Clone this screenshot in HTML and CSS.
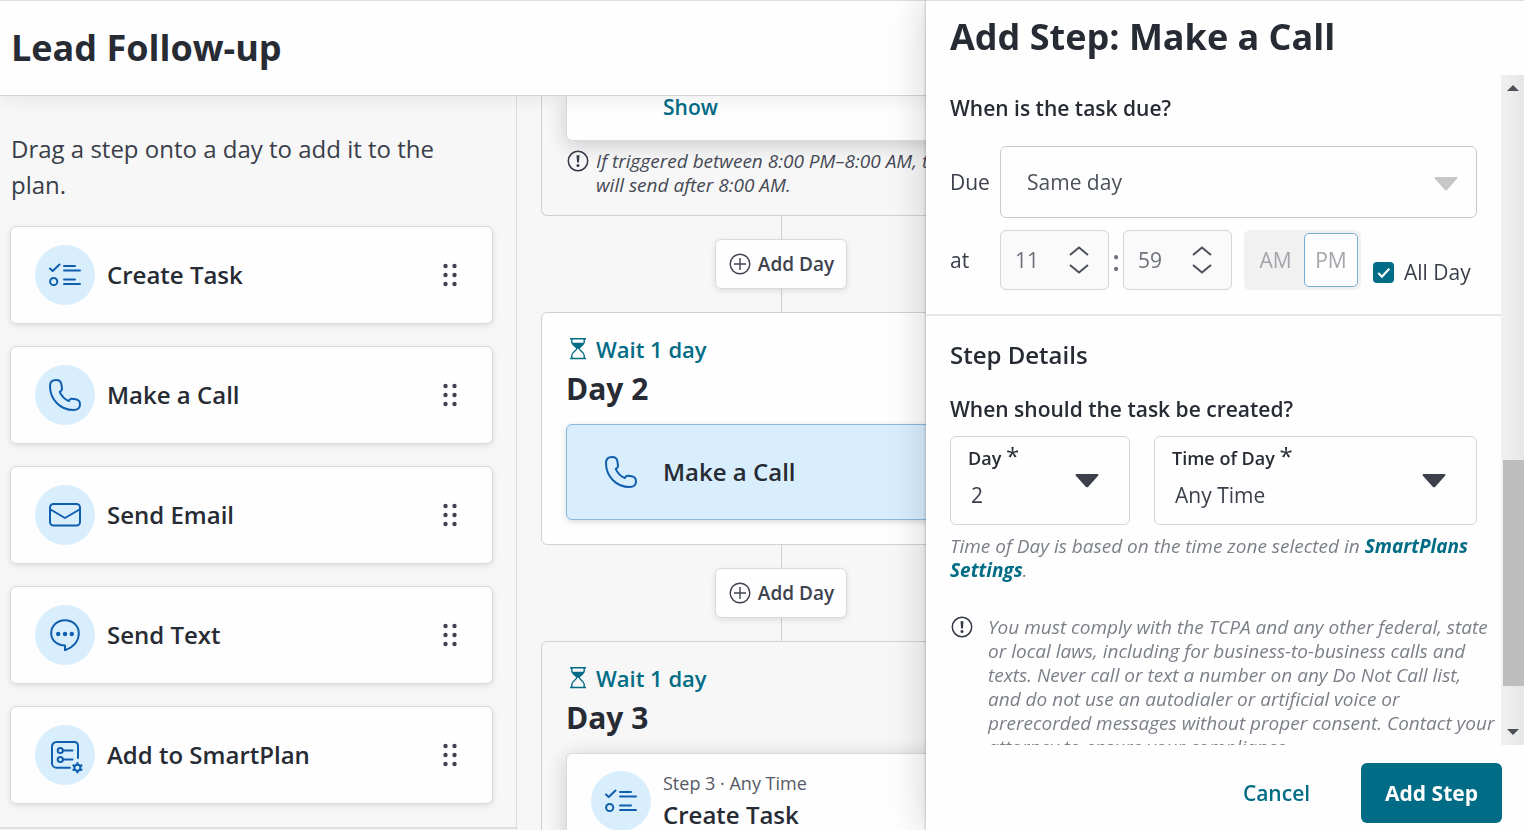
FILE: index.html
```html
<!DOCTYPE html>
<html lang="en">
<head>
<meta charset="utf-8">
<title>Lead Follow-up</title>
<link rel="stylesheet" href="styles.css">
</head>
<body>
<svg class="sprite" aria-hidden="true">
  <symbol id="i-task" viewBox="0 0 32 32">
    <g fill="none" stroke="currentColor" stroke-width="2" stroke-linecap="round" stroke-linejoin="round">
      <path d="M1 9.500l2.700 2.500L10.500 5.500"/>
      <circle cx="4.700" cy="22.500" r="3.600"/>
      <path d="M15 7h11M15 11.500h16M15 20.500h11M15 25h16"/>
    </g>
  </symbol>
  <symbol id="i-call" viewBox="0 0 32 32">
    <path fill="none" stroke="currentColor" stroke-width="2" stroke-linejoin="round" d="M7 1C3.300 1 1 3.300 1 7c0 7.500 3 13.300 7 17.200C12 28.300 17.800 31 24.500 31c4.300 0 6.500-2 6.500-5.500 0-3-1.300-4.700-4.300-5.200l-4-.6c-1.200-.2-2 .3-2.900 2.300-4-1.700-7.200-4.800-9.100-9.200 2.300-1.200 2.500-2 2.300-3.300l-.6-4.200C12 2.300 10.300 1 7 1z"/>
  </symbol>
  <symbol id="i-mail" viewBox="0 0 32 32">
    <g fill="none" stroke="currentColor" stroke-width="2" stroke-linejoin="round">
      <rect x="1" y="5" width="30" height="21.500" rx="3.500"/>
      <path d="M1.500 10.500L16 19l14.500-8.500"/>
    </g>
  </symbol>
  <symbol id="i-text" viewBox="0 0 32 32">
    <path fill="none" stroke="currentColor" stroke-width="2" stroke-linejoin="round" d="M16 1.200C8 1.200 2.200 7 2.200 14.300c0 7.200 5.800 11.800 13.800 12.200v4.700c8-2.500 13.800-8.700 13.800-16.900C29.800 7 24 1.200 16 1.200z"/>
    <g fill="currentColor"><circle cx="9.200" cy="15" r="2.200"/><circle cx="16" cy="15" r="2.200"/><circle cx="22.800" cy="15" r="2.200"/></g>
  </symbol>
  <symbol id="i-plan" viewBox="0 0 32 32">
    <g fill="none" stroke="currentColor" stroke-width="2" stroke-linecap="round">
      <path d="M29 19V6.500a3.500 3.500 0 0 0-3.500-3.500h-18A4.500 4.500 0 0 0 3 7.500v16.700A4.500 4.500 0 0 0 7.500 28.700H21"/>
      <circle cx="11.300" cy="11.500" r="2.600"/><circle cx="11.300" cy="20.500" r="2.600"/>
      <path d="M14 11.500h9.500M14 20.500h9.500"/>
    </g>
    <circle cx="28.400" cy="28.700" r="3" fill="none" stroke="currentColor" stroke-width="2"/>
    <path stroke="currentColor" stroke-width="2.200" d="M28.400 23.200v2.600M28.400 31.600v2.600M23.600 26l2.300 1.300M30.900 30.100l2.300 1.300M23.600 31.400l2.300-1.300M30.900 27.300l2.300-1.300"/>
  </symbol>
  <symbol id="i-grip" viewBox="0 0 16 24">
    <g fill="currentColor"><circle cx="3.500" cy="3" r="2.200"/><circle cx="12.500" cy="3" r="2.200"/><circle cx="3.500" cy="12" r="2.200"/><circle cx="12.500" cy="12" r="2.200"/><circle cx="3.500" cy="21" r="2.200"/><circle cx="12.500" cy="21" r="2.200"/></g>
  </symbol>
  <symbol id="i-alert" viewBox="0 0 24 24">
    <circle cx="12" cy="12" r="9.700" fill="none" stroke="currentColor" stroke-width="1.500"/>
    <path d="M10.500 6.200h3l-.6 7.300h-1.800z" fill="currentColor"/><circle cx="12" cy="16.400" r="1.500" fill="currentColor"/>
  </symbol>
  <symbol id="i-plus" viewBox="0 0 24 24">
    <g fill="none" stroke="currentColor" stroke-width="1.400"><circle cx="12" cy="12" r="9.800"/><path d="M12 6v12M6 12h12"/></g>
  </symbol>
  <symbol id="i-wait" viewBox="0 0 24 24">
    <path fill="none" stroke="currentColor" stroke-width="1.400" d="M4 1.700h16M4 21.500h16M5.800 1.700v3.600c0 3 5 4.500 5 6.300s-5 3.500-5 6.900v3M18.200 1.700v3.600c0 3-5 4.500-5 6.300s5 3.500 5 6.900v3"/>
    <path fill="currentColor" d="M5.800 5.700h12.400c-.8 2.500-4.700 4-5 6h-2.400c-.3-2-4.200-3.500-5-6z"/>
  </symbol>
</svg>

<header class="topbar"><h1 class="title">Lead Follow-up</h1></header>

<main class="workspace">
  <aside class="palette">
    <div class="palette-steps">
      <p class="palette-intro">Drag a step onto a day to add it to the plan.</p>
      <ul class="step-list">
        <li class="step"><span class="badge"><svg class="icon"><use href="#i-task"/></svg></span><span class="step-name">Create Task</span><svg class="grip"><use href="#i-grip"/></svg></li>
        <li class="step"><span class="badge"><svg class="icon"><use href="#i-call"/></svg></span><span class="step-name">Make a Call</span><svg class="grip"><use href="#i-grip"/></svg></li>
        <li class="step"><span class="badge"><svg class="icon"><use href="#i-mail"/></svg></span><span class="step-name">Send Email</span><svg class="grip"><use href="#i-grip"/></svg></li>
        <li class="step"><span class="badge"><svg class="icon"><use href="#i-text"/></svg></span><span class="step-name">Send Text</span><svg class="grip"><use href="#i-grip"/></svg></li>
        <li class="step"><span class="badge"><svg class="icon"><use href="#i-plan"/></svg></span><span class="step-name">Add to SmartPlan</span><svg class="grip"><use href="#i-grip"/></svg></li>
      </ul>
    </div>
  </aside>

  <section class="canvas">
    <article class="day day-first">
      <div class="card card-tail"><a class="link" href="#show">Show</a></div>
      <p class="quiet-note"><svg class="note-icon"><use href="#i-alert"/></svg><span>If triggered between 8:00 PM–8:00 AM, the text will send after 8:00 AM.</span></p>
    </article>
    <div class="connector"><button class="add-day" type="button"><svg class="small-icon"><use href="#i-plus"/></svg>Add Day</button></div>
    <article class="day day-active">
      <a class="link wait" href="#wait-2"><svg class="small-icon"><use href="#i-wait"/></svg>Wait 1 day</a>
      <h2 class="day-title">Day 2</h2>
      <div class="card card-selected"><span class="badge"><svg class="icon"><use href="#i-call"/></svg></span><span class="step-name">Make a Call</span></div>
    </article>
    <div class="connector"><button class="add-day" type="button"><svg class="small-icon"><use href="#i-plus"/></svg>Add Day</button></div>
    <article class="day">
      <a class="link wait" href="#wait-3"><svg class="small-icon"><use href="#i-wait"/></svg>Wait 1 day</a>
      <h2 class="day-title">Day 3</h2>
      <div class="card"><span class="badge"><svg class="icon"><use href="#i-task"/></svg></span><span class="card-text"><span class="card-meta">Step 3 · Any Time</span><span class="step-name">Create Task</span></span></div>
    </article>
  </section>
</main>

<form class="drawer">
  <header class="drawer-head"><h2 class="title">Add Step: Make a Call</h2></header>
  <div class="drawer-mid">
    <div class="drawer-body">
      <section class="due">
        <h3 class="question">When is the task due?</h3>
        <div class="due-row">
          <label class="due-label" for="due">Due</label>
          <span class="select-wrap due-select">
            <select id="due" disabled><option>Same day</option></select>
            <svg class="caret" viewBox="0 0 24 14"><path d="M1.500 0h21c1 0 1.300 1 .6 1.700l-9.800 11c-.8.800-1.800.8-2.600 0L.9 1.700C.2 1 .5 0 1.500 0z"/></svg>
          </span>
        </div>
        <div class="due-row time-row">
          <label class="due-label" for="hour">at</label>
          <span class="spinner"><input id="hour" type="text" value="11" disabled><svg class="updown" viewBox="0 0 20 28"><path d="M1 9l9-7.500L19 9M1 19l9 7.500L19 19"/></svg></span>
          <span class="colon">:</span>
          <span class="spinner"><input type="text" value="59" aria-label="Minute" disabled><svg class="updown" viewBox="0 0 20 28"><path d="M1 9l9-7.500L19 9M1 19l9 7.500L19 19"/></svg></span>
          <span class="ampm"><button type="button" disabled>AM</button><button class="on" type="button" disabled>PM</button></span>
          <label class="all-day"><input type="checkbox" checked><svg class="tick" viewBox="0 0 20 20"><path d="M5 10.500l3.500 3.500L15.500 6.500"/></svg>All Day</label>
        </div>
      </section>
      <section class="details">
        <h3 class="section-title">Step Details</h3>
        <h4 class="question">When should the task be created?</h4>
        <div class="fields">
          <div class="field field-day"><label for="day">Day <span class="star">*</span></label><select id="day"><option>2</option></select><svg class="caret" viewBox="0 0 24 14"><path d="M1.500 0h21c1 0 1.300 1 .6 1.700l-9.800 11c-.8.800-1.800.8-2.600 0L.9 1.700C.2 1 .5 0 1.500 0z"/></svg></div>
          <div class="field"><label for="tod">Time of Day <span class="star">*</span></label><select id="tod"><option>Any Time</option></select><svg class="caret" viewBox="0 0 24 14"><path d="M1.500 0h21c1 0 1.300 1 .6 1.700l-9.800 11c-.8.800-1.800.8-2.600 0L.9 1.700C.2 1 .5 0 1.500 0z"/></svg></div>
        </div>
        <p class="hint">Time of Day is based on the time zone selected in <a class="link" href="#settings">SmartPlans Settings</a>.</p>
        <p class="notice"><svg class="note-icon"><use href="#i-alert"/></svg><span>You must comply with the TCPA and any other federal, state or local laws, including for business-to-business calls and texts. Never call or text a number on any Do Not Call list, and do not use an autodialer or artificial voice or prerecorded messages without proper consent. Contact your attorney to ensure your compliance.</span></p>
      </section>
    </div>
    <div class="scrollbar" aria-hidden="true">
      <svg class="arrow" viewBox="0 0 12 6"><path d="M6 0l6 6H0z"/></svg>
      <span class="track"><span class="thumb"></span></span>
      <svg class="arrow" viewBox="0 0 12 6"><path d="M0 0h12L6 6z"/></svg>
    </div>
  </div>
  <footer class="drawer-foot"><button class="cancel" type="button">Cancel</button><button class="submit" type="submit">Add Step</button></footer>
</form>
</body>
</html>
```
FILE: styles.css
```css
* { box-sizing: border-box; }
body {
  margin: 0;
  height: 100vh;
  display: flex;
  flex-direction: column;
  overflow: hidden;
  background: #f7f7f7;
  color: #272b34;
  font-family: "Open Sans", "Noto Sans", sans-serif;
  font-size: 21px;
}
h1, h2, h3, h4, p, ul { margin: 0; padding: 0; }
button, input, select { font: inherit; color: inherit; }
.sprite { position: absolute; width: 0; height: 0; }

.title { font-size: 36px; font-weight: 700; line-height: 48px; }
.link { color: #006c85; font-weight: 600; text-decoration: none; }

.topbar {
  flex: none;
  padding: 23px 11px;
  height: 96px;
  background: #fefefe;
  border-top: 1px solid #dadfe3;
  border-bottom: 1px solid #d2d3d4;
  box-shadow: 0 2px 20px rgba(0, 0, 0, .08);
  position: relative;
  z-index: 1;
}

.workspace { flex: 1; display: flex; min-height: 0; }

/* Palette */
.palette { flex: 0 0 517px; border-right: 1px solid #dddee0; overflow: hidden; }
.palette-steps { padding: 35px 23px 23px 10px; border-bottom: 2px solid #dddfe0; }
.palette-intro { padding: 0 30px 0 1px; font-size: 24px; line-height: 36px; color: #393e4a; }
.step-list { list-style: none; margin-top: 23px; display: grid; gap: 22px; }
.step {
  display: flex;
  align-items: center;
  gap: 12px;
  padding: 18px 34px 18px 24px;
  background: #fefefe;
  border: 1px solid #d8dadb;
  border-radius: 6px;
  box-shadow: 0 2px 6px rgba(0, 0, 0, .1);
}
.badge {
  flex: none;
  width: 60px;
  height: 60px;
  display: grid;
  place-items: center;
  border-radius: 50%;
  background: #d9eefd;
  color: #0f5fae;
}
.icon { width: 32px; height: 32px; overflow: visible; }
#i-plan { overflow: visible; }
.step-name { flex: 1; font-size: 24px; font-weight: 600; line-height: 32px; }
.grip { width: 16px; height: 24px; color: #3d424e; }

/* Plan canvas */
.canvas { flex: 1; padding-left: 24px; overflow: hidden; }
.day, .connector { width: 480px; }
.day { padding: 24px; border: 1px solid #cfd1d2; border-radius: 6px; }
.day-first { padding-top: 0; padding-bottom: 0; border-top: 0; border-radius: 0 0 6px 6px; }
.day-active { background: #fefefe; }
.card {
  display: flex;
  align-items: center;
  gap: 12px;
  min-height: 96px;
  padding: 17px 24px;
  background: #fefefe;
  border: 1px solid #d8dadb;
  border-radius: 6px;
  box-shadow: 0 4px 20px rgba(20, 25, 40, .2);
}
.card-tail {
  min-height: 0;
  padding: 0 96px 22px;
  border-top: 0;
  border-radius: 0 0 6px 6px;
  line-height: 22px;
}
.card-selected { background: #d9eefd; border-color: #88b9dc; box-shadow: 0 2px 6px rgba(0, 0, 0, .15); }
.card-text { display: flex; flex-direction: column; gap: 4px; }
.card-meta { font-size: 18px; line-height: 24px; color: #555963; }
.quiet-note {
  display: flex;
  gap: 6px;
  margin-top: 8px;
  padding-bottom: 18px;
  font-size: 19px;
  font-style: italic;
  line-height: 24px;
  color: #454955;
}
.note-icon { flex: none; width: 24px; height: 24px; color: #333845; }
.connector {
  display: flex;
  justify-content: center;
  padding: 23px 0;
  background: linear-gradient(#cfd1d2, #cfd1d2) center / 1px 100% no-repeat;
}
.add-day {
  display: flex;
  align-items: center;
  gap: 6px;
  height: 50px;
  padding: 0 12px;
  background: #fefefe;
  border: 1px solid #d8dadb;
  border-radius: 6px;
  box-shadow: 0 2px 6px rgba(0, 0, 0, .1);
  font-size: 19px;
  font-weight: 600;
  color: #3d424e;
}
.small-icon { flex: none; width: 24px; height: 24px; }
.wait { display: flex; gap: 6px; font-size: 22px; line-height: 24px; }
.day-title { margin: 8px 0 15px; font-size: 30px; line-height: 40px; }

/* Drawer */
.drawer {
  position: fixed;
  z-index: 2;
  top: 0;
  right: 0;
  bottom: 0;
  width: 598px;
  display: flex;
  flex-direction: column;
  background: #fefefe;
  border-top: 1px solid #dadfe3;
  box-shadow: 0 0 36px rgba(20, 25, 35, .2), 0 0 3px rgba(0, 0, 0, .3);
}
.drawer-head { flex: none; height: 74px; padding: 12px 24px; }
.drawer-mid { flex: 1; display: flex; min-height: 0; }
.drawer-body { flex: 1; min-width: 0; overflow: hidden; }
.due { padding: 17px 24px 24px; border-bottom: 2px solid #e5e6e7; }
.details { padding: 23px 24px; }
.question { font-size: 21px; font-weight: 600; line-height: 32px; }
.due-row { display: flex; align-items: center; margin-top: 22px; }
.time-row { margin-top: 12px; }
.due-label { flex: 0 0 50px; color: #393e4a; }
.select-wrap { flex: 1; position: relative; }
select {
  appearance: none;
  width: 100%;
  border: 0;
  background: transparent;
  opacity: 1;
  color: #393e4a;
}
.due-select select { height: 72px; padding: 0 26px; border: 1px solid #c7cbce; border-radius: 6px; color: #4b505b; }
.caret { position: absolute; width: 24px; height: 14px; fill: #3b404b; pointer-events: none; }
.due-select .caret { right: 19px; top: 31px; fill: #c5c7c9; }
.spinner {
  display: flex;
  align-items: center;
  width: 109px;
  height: 60px;
  padding: 0 19px 0 14px;
  background: #fafafa;
  border: 1px solid #d3d5d7;
  border-radius: 6px;
}
.spinner input { flex: 1; min-width: 0; padding: 0; border: 0; background: transparent; color: #6c717b; }
.updown { flex: none; width: 20px; height: 28px; fill: none; stroke: #4a4f5a; stroke-width: 2; }
.colon { width: 14px; text-align: center; font-size: 28px; font-weight: 600; line-height: 32px; color: #6c717b; }
.ampm { display: flex; margin-left: 12px; padding: 3px; height: 60px; background: #f1f1f1; border-radius: 6px; }
.ampm button { width: 54px; padding: 0; border: 1px solid transparent; border-radius: 5px; background: transparent; color: #a2a5ab; }
.ampm button:first-child { width: 57px; }
.ampm .on { background: #fefefe; border-color: #71add4; }
.all-day { position: relative; display: flex; align-items: center; gap: 10px; margin: 24px 0 0 12px; white-space: nowrap; color: #393e4a; }
.all-day input { appearance: none; margin: 0; width: 21px; height: 21px; border-radius: 4px; background: #006c85; }
.tick { position: absolute; left: 0; width: 21px; height: 21px; fill: none; stroke: #fff; stroke-width: 2; }

.section-title { font-size: 24px; font-weight: 600; line-height: 32px; }
.details .question { margin-top: 22px; }
.fields { display: flex; gap: 24px; margin-top: 11px; }
.field { position: relative; flex: 1; height: 89px; padding: 7px 17px; border: 1px solid #d3d5d7; border-radius: 6px; }
.field-day { flex: 0 0 180px; }
.field label { display: block; font-size: 18px; font-weight: 600; line-height: 28px; }
.star { font-size: 24px; font-weight: 400; line-height: 20px; }
.field select { height: 46px; padding: 0 3px; }
.field .caret { right: 30px; top: 37px; }
.hint, .notice { font-size: 19px; font-style: italic; line-height: 24px; color: #7b7f88; }
.hint { margin-top: 9px; }
.notice { display: flex; gap: 14px; margin: 33px -20px 0 0; }
.hint .link { font-weight: 700; }

.scrollbar {
  flex: none;
  width: 23px;
  display: flex;
  flex-direction: column;
  align-items: center;
  padding: 10px 0;
  background: linear-gradient(90deg, #f1f1f1, #e6e6e6);
}
.arrow { flex: none; width: 12px; height: 6px; fill: #4b4f56; }
.track { flex: 1; align-self: stretch; display: flex; flex-direction: column; justify-content: flex-end; padding: 0 0 43px 2px; }
.thumb { height: 38%; background: #bdbdbd; }

.drawer-foot { flex: none; display: flex; justify-content: flex-end; gap: 24px; padding: 18px 22px 7px; }
.drawer-foot button { height: 60px; border: 0; border-radius: 6px; font-weight: 700; }
.drawer-foot .cancel { padding: 0 27px; background: transparent; color: #006c85; font-weight: 600; }
.submit { padding: 0 24px; background: #006c85; color: #fefefe; }
```
